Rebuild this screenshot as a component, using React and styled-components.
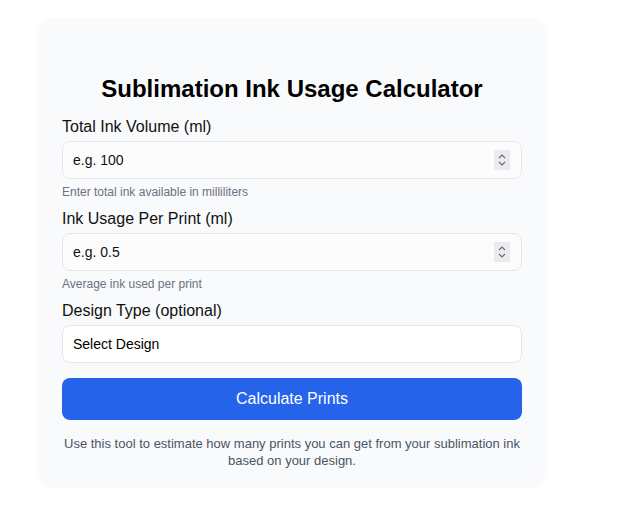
import React from "react";
import styled, { createGlobalStyle } from "styled-components";

const Global = createGlobalStyle`
  html, body { margin: 0; padding: 0; background: #ffffff; }
  body { font-family: "Liberation Sans", Arial, sans-serif; color: #111827; }
  * { box-sizing: border-box; }
`;

const Page = styled.div`
  width: 624px;
  height: 511px;
  padding: 18px 0 0 38px;
  overflow: hidden;
`;

const Card = styled.div`
  width: 508px;
  background: #f9fafb;
  border-radius: 16px;
  box-shadow: 0 1px 5px rgba(0, 0, 0, 0.04);
  padding: 56px 24px 17px;
  display: flex;
  flex-direction: column;
`;

const Title = styled.h1`
  margin: 0 0 14px;
  font-size: 24px;
  line-height: 30px;
  font-weight: 700;
  text-align: center;
  color: #000;
`;

const Field = styled.div`
  display: flex;
  flex-direction: column;
  margin-bottom: ${(p) => p.$mb || 11}px;
`;

const Label = styled.label`
  font-size: 16px;
  line-height: 18px;
  color: #111;
  margin-bottom: 5px;
`;

const InputWrap = styled.div`
  position: relative;
  height: 38px;
`;

const Input = styled.input`
  width: 100%;
  height: 38px;
  border: 1px solid #e5e7eb;
  border-radius: 8px;
  background: #fcfcfd;
  padding: 0 10px;
  font-family: "Liberation Sans", Arial, sans-serif;
  font-size: 14px;
  color: #111;
  outline: none;
  &::placeholder { color: #111; opacity: 1; }
`;

const Spinner = styled.div`
  position: absolute;
  right: 12px;
  top: 9px;
  width: 16px;
  height: 20px;
  background: #ebebef;
  display: flex;
  align-items: center;
  justify-content: center;
`;

const Help = styled.div`
  font-size: 12px;
  line-height: 14px;
  color: #6b7280;
  margin-top: 6px;
`;

const Select = styled.select`
  width: 100%;
  height: 38px;
  border: 1px solid #e5e7eb;
  border-radius: 8px;
  background: #ffffff;
  padding: 0 10px;
  font-family: "Liberation Sans", Arial, sans-serif;
  font-size: 14px;
  color: #000;
  appearance: none;
  -webkit-appearance: none;
  outline: none;
`;

const Button = styled.button`
  flex-shrink: 0;
  height: 42px;
  width: 100%;
  border: none;
  border-radius: 8px;
  background: #2563eb;
  color: #fff;
  font-family: "Liberation Sans", Arial, sans-serif;
  font-size: 16px;
  cursor: pointer;
`;

const Note = styled.p`
  margin: 15px 0 0;
  font-size: 13px;
  line-height: 17px;
  text-align: center;
  color: #4b5563;
`;

const SpinIcon = () => (
  <svg width="10" height="14" viewBox="0 0 10 14" fill="none" stroke="#6b6b6b" strokeWidth="1.2">
    <path d="M2 5 L5 2 L8 5" />
    <path d="M2 9 L5 12 L8 9" />
  </svg>
);

const NumberField = ({ label, placeholder, help }) => (
  <Field $mb={11}>
    <Label>{label}</Label>
    <InputWrap>
      <Input type="text" placeholder={placeholder} />
      <Spinner>
        <SpinIcon />
      </Spinner>
    </InputWrap>
    <Help>{help}</Help>
  </Field>
);

export default function App() {
  return (
    <>
      <Global />
      <Page>
        <Card>
          <Title>Sublimation Ink Usage Calculator</Title>
          <NumberField label="Total Ink Volume (ml)" placeholder="e.g. 100" help="Enter total ink available in milliliters" />
          <NumberField label="Ink Usage Per Print (ml)" placeholder="e.g. 0.5" help="Average ink used per print" />
          <Field $mb={15}>
            <Label>Design Type (optional)</Label>
            <Select defaultValue="">
              <option value="">Select Design</option>
              <option value="simple">Simple</option>
              <option value="complex">Complex</option>
            </Select>
          </Field>
          <Button>Calculate Prints</Button>
          <Note>
            Use this tool to estimate how many prints you can get from your sublimation ink
            <br />
            based on your design.
          </Note>
        </Card>
      </Page>
    </>
  );
}
